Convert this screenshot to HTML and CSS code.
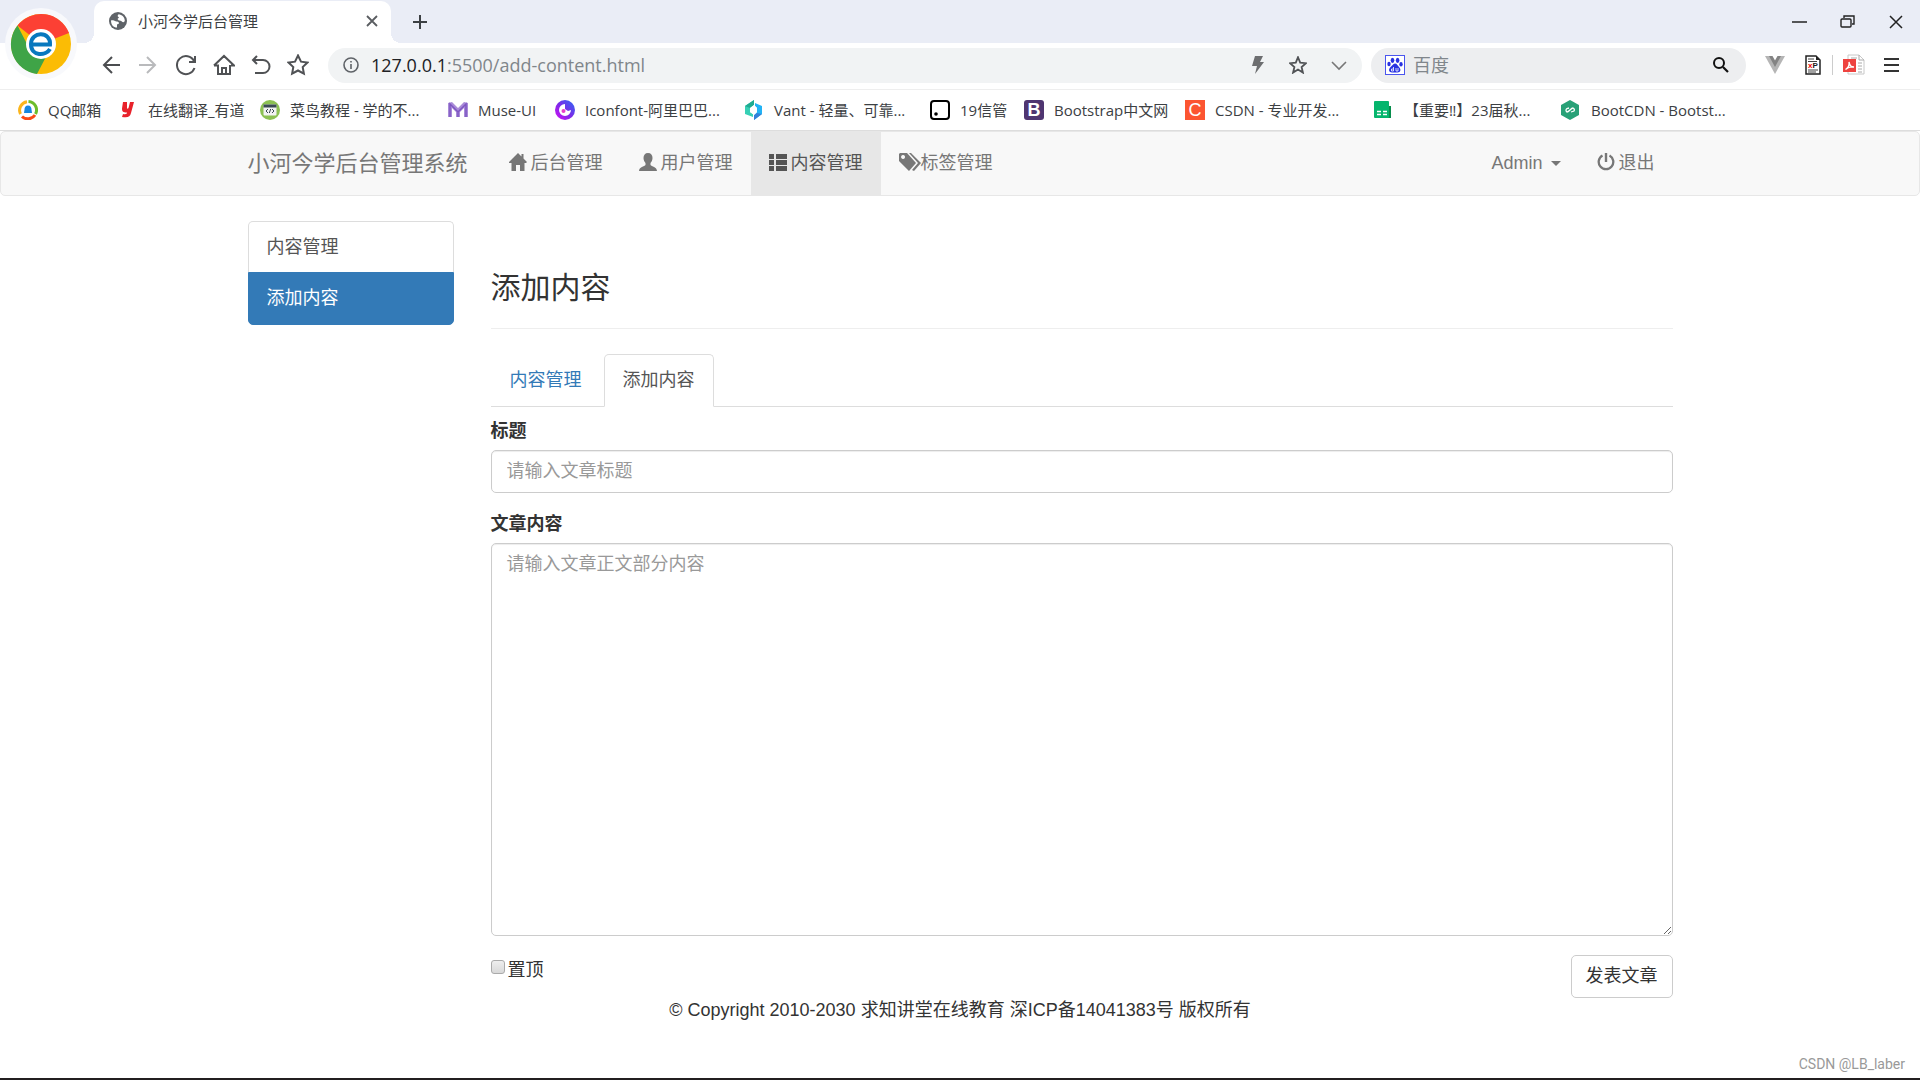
FILE: index.html
```html
<!DOCTYPE html>
<html lang="zh-CN">
<head>
<meta charset="utf-8">
<title>小河今学后台管理</title>
<link rel="stylesheet" href="styles.css">
</head>
<body>
<header class="browser">
  <div class="tabstrip">
    <div class="tab">
      <svg class="tab-icon" width="18" height="18" viewBox="0 0 18 18"><circle cx="9" cy="9" r="9" fill="#5f6368"/><path d="M2 8.500C4 8 6 9 7 9.500c2 0 3 .500 3 2L8 12.500v3C4.500 15.500 2 13 2 8.500z" fill="#fff"/><path d="M9.500 2.200C13 2.500 15.800 5 15.800 9c-1 1.500-2 1.500-3 .500-.500-1-2-1-3-1L8.500 7l1.500-1.500L8.500 4z" fill="#fff"/></svg>
      <span class="tab-title">小河今学后台管理</span>
      <button class="icon-btn" aria-label="关闭标签页"><svg width="12" height="12" viewBox="0 0 12 12"><path d="M1 1l10 10M11 1L1 11" stroke="#5a5d61" stroke-width="1.800"/></svg></button>
    </div>
    <button class="icon-btn new-tab" aria-label="新标签页"><svg width="16" height="16" viewBox="0 0 16 16"><path d="M8 1v14M1 8h14" stroke="#3c4043" stroke-width="2"/></svg></button>
    <div class="window-buttons">
      <button class="icon-btn" aria-label="最小化"><svg width="16" height="16" viewBox="0 0 16 16"><path d="M0 8h15" stroke="#222" stroke-width="1.5"/></svg></button>
      <button class="icon-btn" aria-label="还原"><svg width="16" height="16" viewBox="0 0 16 16" fill="none" stroke="#222" stroke-width="1.4"><rect x="1" y="5" width="10" height="8" rx="1"/><path d="M4 4V2h10v8h-2"/></svg></button>
      <button class="icon-btn" aria-label="关闭"><svg width="16" height="16" viewBox="0 0 16 16"><path d="M2 2l12 12M14 2L2 14" stroke="#222" stroke-width="1.5"/></svg></button>
    </div>
  </div>
  <svg class="logo" width="72" height="72" viewBox="0 0 72 72"><circle cx="36" cy="36" r="36" fill="#f8f9fc"/><circle cx="36" cy="36" r="30" fill="#fbbc05"/><path d="M36 36L12.500 17.500A30 30 0 0 1 64 25z" fill="#fc4034"/><path d="M12.500 17.500A30 30 0 0 0 32 66L43 45 22 36z" fill="#3fa447"/><circle cx="36" cy="36" r="15" fill="#fff"/><path d="M28 36.500H45C46 23 26 23 26 36C26 49 41 48 45 41" fill="none" stroke="#0878be" stroke-width="4"/></svg>
  <div class="toolbar">
    <div class="tools">
      <button class="icon-btn" aria-label="后退"><svg width="20" height="20" viewBox="0 0 20 20" fill="none" stroke="#4b4d50" stroke-width="2"><path d="M19 10H3M11 2L3 10l8 8"/></svg></button>
      <button class="icon-btn" aria-label="前进"><svg width="20" height="20" viewBox="0 0 20 20" fill="none" stroke="#b9babc" stroke-width="2"><path d="M1 10h16M9 2l8 8-8 8"/></svg></button>
      <button class="icon-btn" aria-label="刷新"><svg width="22" height="22" viewBox="0 0 22 22" fill="none" stroke="#505255" stroke-width="2"><path d="M19 7A9 9 0 1 0 19.500 14M20 2v6h-6"/></svg></button>
      <button class="icon-btn" aria-label="主页"><svg width="22" height="22" viewBox="0 0 22 22" fill="none" stroke="#505255" stroke-width="2"><path d="M1 11.500L11 2l10 9.500H18M1 11.500h4V20h12v-9M9 20v-6h4v6"/></svg></button>
      <button class="icon-btn" aria-label="撤销"><svg width="20" height="20" viewBox="0 0 20 20" fill="none" stroke="#505255" stroke-width="2"><path d="M6 1L2 5l4 4M2 5h10a6.500 6.500 0 0 1 0 13H4"/></svg></button>
      <button class="icon-btn" aria-label="收藏夹"><svg width="22" height="22" viewBox="0 0 22 22" fill="none" stroke="#505255" stroke-width="2"><path d="M11 1.500l3 6.200 6.500.900-4.800 4.500 1.200 6.600L11 16.500l-5.900 3.200 1.200-6.600L1.500 8.600 8 7.700z"/></svg></button>
    </div>
    <div class="address">
      <svg width="16" height="16" viewBox="0 0 16 16" fill="none" stroke="#5f6368" stroke-width="1.6"><circle cx="8" cy="8" r="7"/><path d="M8 7v5M8 4v1.600"/></svg>
      <span class="url"><span class="host">127.0.0.1</span>:5500/add-content.html</span>
      <span class="address-actions">
        <button class="icon-btn" aria-label="极速模式"><svg width="14" height="18" viewBox="0 0 14 18"><path d="M4 0h8L9 6h4L4 18l2-8H1z" fill="#6d6e70"/></svg></button>
        <button class="icon-btn" aria-label="收藏"><svg width="18" height="18" viewBox="0 0 22 22" fill="none" stroke="#505255" stroke-width="2.200"><path d="M11 1.500l2.700 6.700 7 .600-5.300 4.600 1.600 6.900L11 16.600l-6 3.700 1.600-6.900L1.300 8.800l7-.600z"/></svg></button>
        <button class="icon-btn" aria-label="更多"><svg width="16" height="16" viewBox="0 0 16 16" fill="none" stroke="#777" stroke-width="1.600"><path d="M1 5l7 7 7-7"/></svg></button>
      </span>
    </div>
    <div class="search">
      <svg width="20" height="20" viewBox="0 0 20 20"><rect x=".5" y=".5" width="19" height="19" fill="#fff" stroke="#4a55ee"/><g fill="#2932e1"><ellipse cx="7.500" cy="5.300" rx="1.800" ry="2.600"/><ellipse cx="12.600" cy="5.300" rx="1.800" ry="2.600"/><ellipse cx="4" cy="9" rx="1.700" ry="2.300"/><ellipse cx="16" cy="9.300" rx="1.700" ry="2.300"/><path d="M10 8.500c2 0 2.500 2 4 3.500 2.500 2.500 1.500 5.500-1.500 5.500H7c-3 0-4-3-1.500-5.500C7 11 8 8.500 10 8.500z"/></g><path d="M8.500 12v4h-2v-2h2M11 13v3h2v-3" fill="none" stroke="#fff" stroke-width=".8"/></svg>
      <input class="search-input" type="text" placeholder="百度" aria-label="百度">
      <button class="icon-btn" aria-label="搜索"><svg width="18" height="18" viewBox="0 0 18 18" fill="none" stroke="#111" stroke-width="2"><circle cx="7" cy="7" r="5"/><path d="M11 11l5 5" stroke-width="2.200"/></svg></button>
    </div>
    <div class="extensions">
      <button class="icon-btn" aria-label="Vue"><svg width="20" height="18" viewBox="0 0 20 18"><path d="M0 0h20L10 18z" fill="#b5b5b5"/><path d="M4 0h12l-6 11z" fill="#838383"/><path d="M7.500 0h5L10 4.500z" fill="#fff"/></svg></button>
      <button class="icon-btn" aria-label="XPath"><svg width="16" height="20" viewBox="0 0 16 20"><path d="M1 1h10l4 4v14H1z" fill="#fff" stroke="#222" stroke-width="1.500"/><path d="M11 1v4h4z" fill="#222"/><path d="M3 4h6M3 6.500h9M3 15h10M3 17h8" stroke="#444"/><text class="xp" x="3" y="13"><tspan fill="#e00">x</tspan><tspan fill="#222">P</tspan></text></svg></button>
      <span class="divider"></span>
      <button class="icon-btn" aria-label="PDF"><svg width="22" height="22" viewBox="0 0 22 22"><path d="M5 1h11l5 5v14H5z" fill="#fff" stroke="#c8c8c8"/><path d="M16 1v5h5M8 4h6M15 9h4M15 12h4M15 15h4M15 18h4" fill="none" stroke="#aaa"/><rect x="0" y="5" width="13" height="13" fill="#ee4340"/><path d="M2.500 15.500C5 14 6.500 11 6 8c1 4 2 5 5 5-3-.500-6 .500-8.500 2.500z" fill="none" stroke="#fff" stroke-width="1.300"/></svg></button>
      <button class="icon-btn menu" aria-label="菜单"><svg width="16" height="16" viewBox="0 0 16 16"><path d="M0 2h15M0 8h15M0 14h15" stroke="#333" stroke-width="2"/></svg></button>
    </div>
  </div>
  <nav class="bookmarks" aria-label="书签">
    <a href="#"><svg width="20" height="20" viewBox="0 0 20 20" fill="none" stroke-width="3"><path d="M2.500 14A8.500 8.500 0 0 1 9 1.800" stroke="#fbb51c"/><path d="M10.500 1.500A8.500 8.500 0 0 1 17.500 14" stroke="#6dbd2b"/><path d="M17 15A8.500 8.500 0 0 1 4 16.500" stroke="#fa4a16"/><path d="M10 5.500c2.500 0 3.500 2 3.500 4l.500 3.500H6l.500-3.500c0-2 1-4 3.500-4z" fill="#1687e0"/></svg><span>QQ邮箱</span></a>
    <a href="#"><svg width="14" height="20" viewBox="0 0 14 20"><path d="M2 2h4v6c0 1 1 1 1.500 0L9 2h4l-3 11c-1 4-3 5-9 4l1-3c3 .500 4 0 4-1.500-4 0-5-1-5-4z" fill="#e8222b"/></svg><span>在线翻译_有道</span></a>
    <a href="#"><svg width="20" height="20" viewBox="0 0 20 20"><circle cx="10" cy="10" r="10" fill="#8cc152"/><rect x="3.500" y="4.500" width="13" height="11" rx="1" fill="#f2f2f2"/><path d="M3.500 6h13" stroke="#3b4a54" stroke-width="3"/><path d="M8 9l-2 2 2 2M12 9l2 2-2 2M10.700 9l-1.400 4" fill="none" stroke="#3b4a54"/></svg><span>菜鸟教程 - 学的不...</span></a>
    <a href="#"><svg width="20" height="20" viewBox="0 0 20 20"><path d="M0 3l4-1 6 6 6-6 4 1v14h-4V8l-4 4v5H8v-5L4 8v9H0z" fill="#a98bd8"/><path d="M2 17V4l8 8 8-8v13M10 17v-5" fill="none" stroke="#7e57c2" stroke-width="1.500"/></svg><span>Muse-UI</span></a>
    <a href="#"><svg width="20" height="20" viewBox="0 0 20 20"><defs><linearGradient id="ring" x1="0" y1="1" x2="1" y2="0"><stop offset="0" stop-color="#d50cf5"/><stop offset=".5" stop-color="#7a2be8"/><stop offset="1" stop-color="#2a6cf5"/></linearGradient></defs><circle cx="10" cy="10" r="10" fill="url(#ring)"/><path d="M10 4a6 6 0 1 0 6 6l-3 1-3-2z" fill="#fff"/><circle cx="8.500" cy="11" r="2" fill="#e83fc8"/></svg><span>Iconfont-阿里巴巴...</span></a>
    <a href="#"><svg width="20" height="20" viewBox="0 0 20 20"><path d="M1 6l9-6v5L6 8v4l3 2v3l-8-3z" fill="#37d0b5"/><path d="M1 6l9-6v5L6 8z" fill="#20ab91"/><path d="M11 3l7 3v8l-8 6v-5l3-3V8l-2-2z" fill="#22b3f5"/><path d="M18 14l-8 6v-5l3-2z" fill="#3580d8"/><path d="M6 8l4-3 3 3v4l-3 3-4-3z" fill="#fff"/></svg><span>Vant - 轻量、可靠...</span></a>
    <a href="#"><svg width="20" height="20" viewBox="0 0 20 20"><rect x="1" y="1" width="18" height="18" rx="3" fill="#fff" stroke="#000" stroke-width="2"/><circle cx="6" cy="14" r="1.800"/></svg><span>19信管</span></a>
    <a href="#"><span class="favicon favicon-b">B</span><span>Bootstrap中文网</span></a>
    <a href="#"><span class="favicon favicon-c">C</span><span>CSDN - 专业开发...</span></a>
    <a href="#"><svg width="20" height="20" viewBox="0 0 20 20"><path d="M14 6h3v12h-3z" fill="#078d4c"/><rect x="0" y="1" width="15" height="17" rx="1" fill="#05b56d"/><path d="M3 11.500h4M9 11.500h4M3 14.500h4M9 14.500h4" stroke="#fff" stroke-width="1.600"/></svg><span>【重要‼】23届秋...</span></a>
    <a href="#"><svg width="20" height="20" viewBox="0 0 20 20"><path d="M9 0l9 5v10l-9 5-9-5V5z" fill="#28a177"/><path d="M8 8L6 8.500Q4 10 6 12C8 12 10 8 12 8Q14 9 13 11l-3 1" fill="none" stroke="#fff" stroke-width="1.300"/></svg><span>BootCDN - Bootst...</span></a>
  </nav>
</header>

<nav class="navbar">
  <div class="container navbar-inner">
    <a class="brand" href="#">小河今学后台管理系统</a>
    <ul class="nav">
      <li><a href="#"><svg class="glyph" viewBox="0 0 18 18"><path d="M9 0l3.500 3.500V1h2v4.500L18 9l-1 1h-1.500v8H11v-6H7v6H2.500v-8H0V9z"/></svg>后台管理</a></li>
      <li><a href="#"><svg class="glyph" viewBox="0 0 18 18"><path d="M9 0c3 0 4.500 2 4.500 5 0 2-1 4-2 5v2c1 1.500 6.500 2 6.500 6H0c0-4 5.500-4.500 6.500-6v-2c-1-1-2-3-2-5C4.500 2 6 0 9 0z"/></svg>用户管理</a></li>
      <li class="active"><a href="#"><svg class="glyph" viewBox="0 0 18 18"><path d="M0 1h5v5H0zM7 1h11v5H7zM0 7h5v5H0zM7 7h11v5H7zM0 13h5v5H0zM7 13h11v5H7z"/></svg>内容管理</a></li>
      <li><a class="tags" href="#"><svg class="glyph glyph-wide" viewBox="0 0 22 18"><path fill-rule="evenodd" d="M1 0h7l9 10-7 8L0 8V1zM4 2a2 2 0 1 0 .1 0zM10 0h2l10 10-7 8-2-1 6-7z"/></svg>标签管理</a></li>
    </ul>
    <ul class="nav nav-right">
      <li><button class="dropdown" aria-haspopup="true">Admin <span class="caret"></span></button></li>
      <li><a href="#"><svg class="glyph" viewBox="0 0 18 18"><path d="M5.500 2.500A7.300 7.300 0 1 0 12.500 2.500" fill="none" stroke="#777" stroke-width="2.300"/><path d="M7.800 0h2.400v9H7.800z"/></svg>退出</a></li>
    </ul>
  </div>
</nav>

<div class="container layout">
  <aside class="list-group">
    <a href="#">内容管理</a>
    <a class="active" href="#">添加内容</a>
  </aside>
  <main class="main">
    <h1 class="page-header">添加内容</h1>
    <ul class="tabs">
      <li><a href="#">内容管理</a></li>
      <li class="active"><a href="#">添加内容</a></li>
    </ul>
    <form>
      <div class="form-group">
        <label for="title">标题</label>
        <input class="control" id="title" type="text" placeholder="请输入文章标题">
      </div>
      <div class="form-group">
        <label for="content">文章内容</label>
        <textarea class="control" id="content" rows="15" placeholder="请输入文章正文部分内容"></textarea>
      </div>
      <div class="form-actions">
        <label class="checkbox"><input type="checkbox">置顶</label>
        <button class="submit" type="submit">发表文章</button>
      </div>
    </form>
  </main>
</div>
<footer class="footer">© Copyright 2010-2030 求知讲堂在线教育 深ICP备14041383号 版权所有</footer>
<div class="watermark">CSDN @LB_laber</div>
</body>
</html>
```
FILE: styles.css
```css
* { box-sizing: border-box; }

body {
  margin: 0;
  min-height: 100vh;
  display: flex;
  flex-direction: column;
  border-bottom: 2px solid #231f20;
  background: #fff;
  color: #333;
  font: 18px/25px "Liberation Sans", "Noto Sans CJK SC", sans-serif;
}

a { color: inherit; text-decoration: none; }
ul { list-style: none; margin: 0; padding: 0; }
svg { display: block; flex: none; }
button, input, textarea { font: inherit; color: inherit; }

.icon-btn {
  display: grid;
  place-items: center;
  padding: 0;
  border: 0;
  background: none;
}

/* Browser frame */
.browser {
  position: relative;
  border-bottom: 1px solid #ddd;
  font-family: "Open Sans", "Noto Sans CJK SC", sans-serif;
  font-size: 15px;
}

.tabstrip {
  display: flex;
  align-items: center;
  height: 43px;
  padding: 0 16px 0 94px;
  background: #eaedf6;
}

.tab {
  position: relative;
  display: flex;
  align-items: center;
  gap: 11px;
  width: 297px;
  height: 42px;
  margin-top: 1px;
  padding: 0 13px 2px 15px;
  border-radius: 10px 10px 0 0;
  background: #fff;
}

.tab::before, .tab::after {
  content: "";
  position: absolute;
  bottom: 0;
  width: 10px;
  height: 10px;
}
.tab::before { right: 100%; background: radial-gradient(circle at 0 0, #eaedf6 10px, #fff 10px); }
.tab::after { left: 100%; background: radial-gradient(circle at 100% 0, #eaedf6 10px, #fff 10px); }

.tab-title { flex: 1; color: #3c4043; }
.new-tab { margin-left: 21px; }
.window-buttons { display: flex; gap: 32px; margin-left: auto; }

.logo { position: absolute; left: 5px; top: 8px; }

.toolbar {
  display: flex;
  align-items: center;
  height: 47px;
  padding: 0 20px 2px 101px;
  border-bottom: 1px solid #eee;
}

.tools { display: flex; gap: 17px; width: 227px; }
.tools .icon-btn:nth-child(n+4) { margin-left: -1px; }

.address, .search {
  display: flex;
  align-items: center;
  height: 35px;
  border-radius: 18px;
  background: #f1f3f4;
}
.address { flex: 1; gap: 12px; padding: 0 15px; }
.url { font-size: 18px; color: #80868b; }
.host { color: #202124; }
.address-actions { display: flex; gap: 24px; margin-left: auto; }

.search {
  width: 375px;
  gap: 8px;
  margin-left: 9px;
  padding: 0 16px 0 14px;
  background: #edeef0;
}
.search-input {
  flex: 1;
  min-width: 0;
  padding: 0;
  border: 0;
  background: none;
  font-size: 18px;
}
.search-input::placeholder { color: #80868b; }

.extensions { display: flex; align-items: center; margin-left: 19px; gap: 10px; }
.extensions .icon-btn:nth-child(2) { margin-left: 10px; }
.divider { width: 1px; height: 20px; margin-left: 1px; background: #ccc; }
.menu { margin-left: 9px; }
.xp { font: bold 8px "Liberation Sans", sans-serif; }

.bookmarks {
  display: grid;
  grid-template-columns: 103px 139px 188px 107px 189px 186px 94px 161px 189px 187px 1fr;
  align-items: center;
  height: 40px;
  padding-left: 18px;
  color: #3c4043;
  white-space: nowrap;
}
.bookmarks a { display: flex; align-items: center; gap: 10px; }
.bookmarks a:nth-child(2) { gap: 13px; }

.favicon {
  width: 20px;
  height: 20px;
  color: #fff;
  font: bold 18px/20px "Liberation Sans", sans-serif;
  text-align: center;
}
.favicon-b { border-radius: 3px; background: #4f3571; }
.favicon-c { background: #fc5531; font-weight: normal; }

/* Site navigation */
.container { width: 100%; max-width: 1463px; margin: 0 auto; padding: 0 19px; }

.navbar {
  margin-bottom: 25px;
  border: 1px solid #e7e7e7;
  border-radius: 5px;
  background: #f8f8f8;
  color: #777;
}
.navbar-inner { display: flex; }
.brand { margin-right: 23px; font-size: 22px; line-height: 63px; white-space: nowrap; }
.nav { display: flex; }
.nav-right { margin-left: auto; }
.nav a, .dropdown {
  display: flex;
  align-items: center;
  gap: 4px;
  height: 63px;
  padding: 0 18px;
  white-space: nowrap;
}
.nav .tags { gap: 0; }
.nav .active a { background: #e7e7e7; color: #555; }
.glyph { width: 18px; height: 18px; margin-bottom: 4px; fill: currentColor; }
.glyph-wide { width: 22px; }
.dropdown { gap: 8px; border: 0; background: none; }
.caret {
  border: 5px solid transparent;
  border-top-color: currentColor;
  border-bottom: 0;
}

/* Page body */
.layout {
  display: grid;
  grid-template-columns: 206px 1fr;
  gap: 37px;
  align-items: start;
}

.list-group { color: #555; }
.list-group a {
  display: block;
  padding: 13px 18px;
  border: 1px solid #ddd;
}
.list-group a:first-child {
  padding-bottom: 12px;
  border-bottom: 0;
  border-radius: 5px 5px 0 0;
}
.list-group a:last-child { border-radius: 0 0 5px 5px; }
.list-group .active { border-color: #337ab7; background: #337ab7; color: #fff; }

.page-header {
  margin: 50px 0 25px;
  padding-bottom: 24px;
  border-bottom: 1px solid #eee;
  font-size: 30px;
  font-weight: normal;
  line-height: 33px;
}

.tabs { display: flex; gap: 3px; border-bottom: 1px solid #ddd; color: #337ab7; }
.tabs li { margin-bottom: -1px; }
.tabs a {
  display: block;
  padding: 13px 18px;
  border: 1px solid transparent;
  border-radius: 5px 5px 0 0;
}
.tabs .active a {
  border-color: #ddd;
  border-bottom-color: #fff;
  background: #fff;
  color: #555;
}

.form-group { margin-bottom: 19px; }
.form-group label { display: block; padding: 0 0 6px; font-weight: bold; }
.tabs + form { padding-top: 12px; }
.control {
  display: block;
  width: 100%;
  padding: 8px 15px;
  border: 1px solid #ccc;
  border-radius: 5px;
  background: #fff;
  box-shadow: inset 0 1px 1px rgba(0, 0, 0, .075);
}
.control::placeholder { color: #999; }
textarea.control { resize: vertical; }

.form-actions { display: flex; justify-content: space-between; align-items: flex-start; }
.checkbox { display: flex; gap: 3px; padding-top: 3px; }
.checkbox input {
  appearance: none;
  width: 14px;
  height: 14px;
  margin: 2px 0 0;
  border: 1px solid #aaa;
  border-radius: 3px;
  background: linear-gradient(#eee, #d8d8d8);
}
.submit {
  padding: 8px 14px;
  border: 1px solid #ccc;
  border-radius: 5px;
  background: #fff;
}

.footer { text-align: center; }

.watermark {
  margin: auto 15px 4px auto;
  color: #999;
  font: 14px/20px Roboto, sans-serif;
}
```
